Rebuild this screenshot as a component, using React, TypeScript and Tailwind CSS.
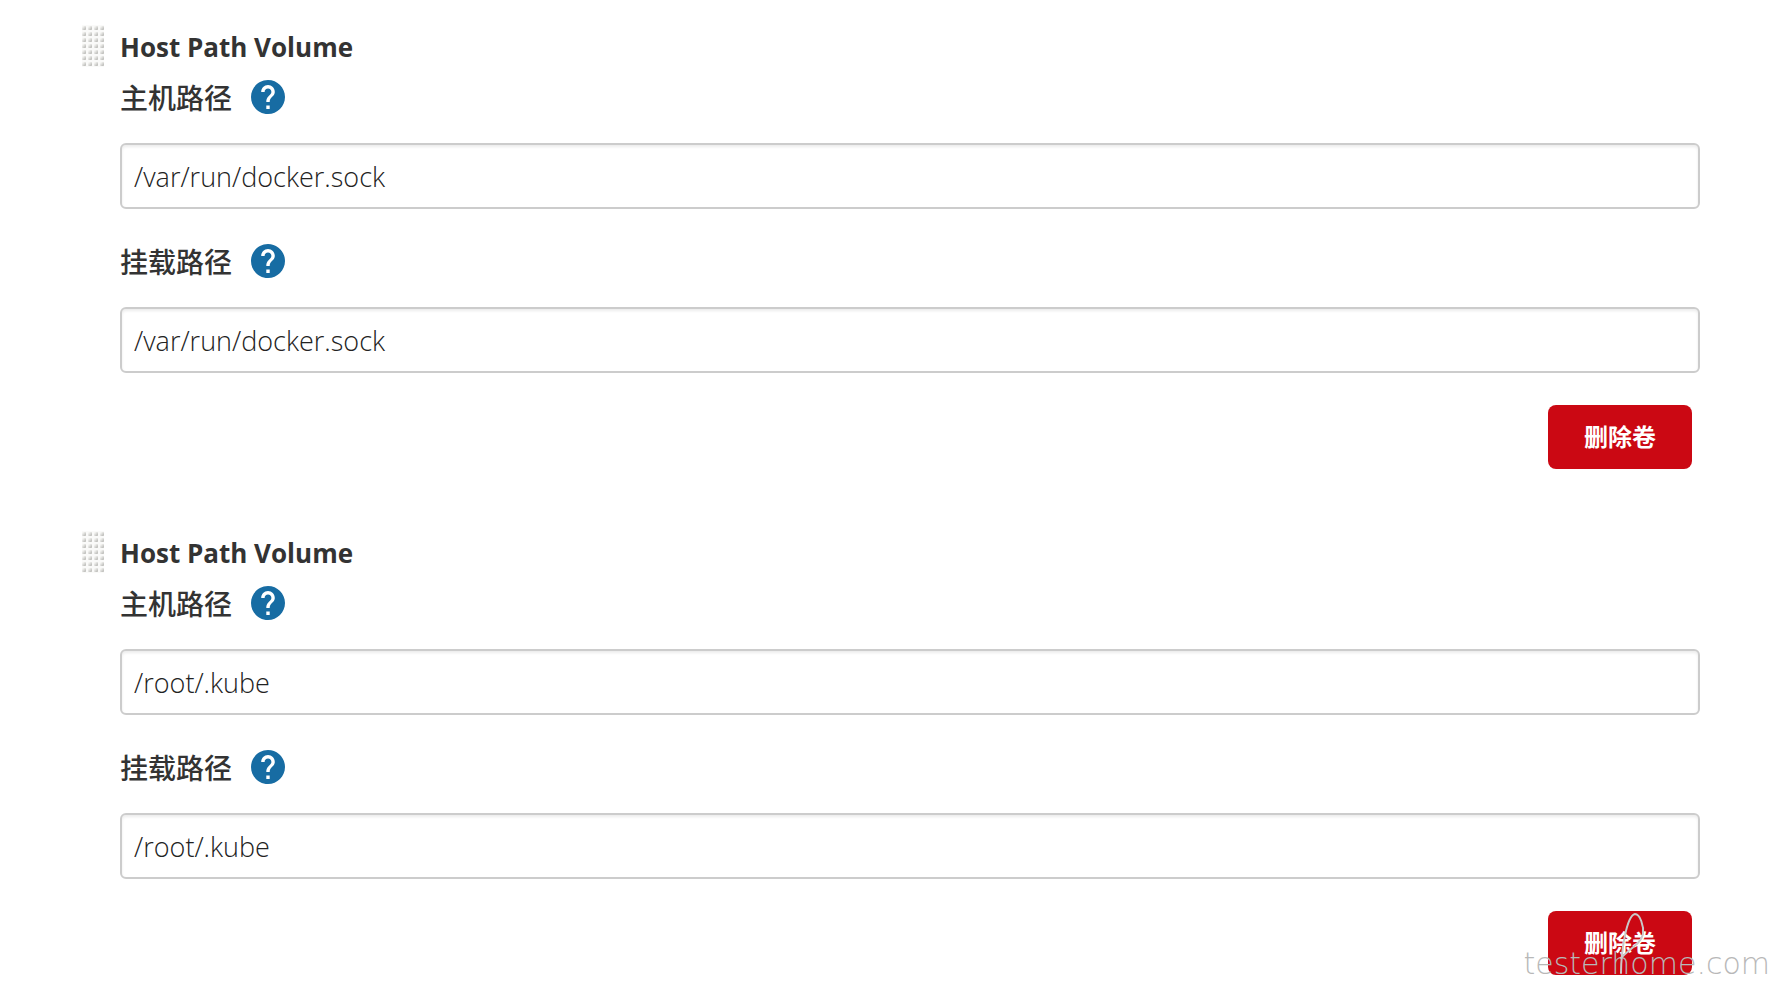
import { useId } from "react";

type Volume = {
  hostPath: string;
  mountPath: string;
};

const volumes: Volume[] = [
  { hostPath: "/var/run/docker.sock", mountPath: "/var/run/docker.sock" },
  { hostPath: "/root/.kube", mountPath: "/root/.kube" },
];

function DragHandle() {
  const id = useId();
  return (
    <svg width="22" height="42" aria-hidden="true" className="-mt-1 shrink-0 cursor-move">
      <defs>
        <linearGradient id={`${id}-dot`} x1="0" y1="0" x2="1" y2="1">
          <stop offset="0.2" stopColor="#f4f4f2" />
          <stop offset="1" stopColor="#b0b0ac" />
        </linearGradient>
        <pattern id={`${id}-grid`} width="6" height="6" patternUnits="userSpaceOnUse">
          <rect width="6" height="6" fill="#fafaf9" />
          <rect x="0" y="1" width="4" height="4" rx="1" fill={`url(#${id}-dot)`} />
        </pattern>
      </defs>
      <rect width="22" height="42" fill={`url(#${id}-grid)`} />
    </svg>
  );
}

function HelpLink({ label }: { label: string }) {
  return (
    <a href="#help" aria-label={`Help: ${label}`} className="text-[#176ca3]">
      <svg viewBox="2 2 20 20" fill="currentColor" className="size-[34px]">
        <path d="M12 2C6.48 2 2 6.48 2 12s4.48 10 10 10 10-4.48 10-10S17.52 2 12 2zm1 17h-2v-2h2v2zm2.07-7.75l-.9.92C13.45 12.9 13 13.5 13 15h-2v-.5c0-1.1.45-2.1 1.17-2.83l1.24-1.26c.37-.36.59-.86.59-1.41 0-1.1-.9-2-2-2s-2 .9-2 2H8c0-2.21 1.79-4 4-4s4 1.79 4 4c0 .88-.36 1.68-.93 2.25z" />
      </svg>
    </a>
  );
}

function PathField({ label, value }: { label: string; value: string }) {
  const id = useId();
  return (
    <div>
      <div className="flex h-[34px] items-center gap-[19px]">
        <label htmlFor={id} className="pt-0.5 text-[28px] leading-8 font-medium">
          {label}
        </label>
        <HelpLink label={label} />
      </div>
      <input
        id={id}
        type="text"
        defaultValue={value}
        className="mt-[29px] block h-[66px] w-full rounded-md border-2 border-[#ccc] bg-white px-3 text-[27px] font-light text-[#222] shadow-[inset_0_2px_3px_rgba(0,0,0,0.08)] focus:border-[#176ca3] focus:outline-none"
      />
    </div>
  );
}

function VolumeSection({ volume }: { volume: Volume }) {
  return (
    <section className="flex gap-4">
      <DragHandle />
      <div className="min-w-0 flex-1">
        <h2 className="text-[26px] leading-9 font-bold">Host Path Volume</h2>
        <div className="mt-[15px] flex flex-col gap-[35px]">
          <PathField label="主机路径" value={volume.hostPath} />
          <PathField label="挂载路径" value={volume.mountPath} />
        </div>
        <div className="mt-8 flex justify-end pr-2">
          <button
            type="button"
            className="h-16 rounded-lg bg-[#cb0813] px-9 text-2xl font-bold text-white hover:bg-[#a8060f]"
          >
            删除卷
          </button>
        </div>
      </div>
    </section>
  );
}

function Watermark() {
  return (
    <div className="pointer-events-none absolute right-0 bottom-5 text-[#b8b8b8]">
      {/* tall loop rising over the middle of the signature */}
      <svg
        viewBox="0 0 30 64"
        fill="none"
        stroke="currentColor"
        strokeWidth="2"
        strokeLinecap="round"
        className="absolute bottom-1 left-[95px] h-16 w-[30px] text-[#c9c9c9]"
      >
        <path d="M3 61C3 42 8 4 17 2C22 2 26 14 25 22C23 32 11 37 3 46" />
      </svg>
      <p className="font-['DejaVu_Sans',sans-serif] text-[30px] leading-8 font-extralight">
        testerhome.com
      </p>
    </div>
  );
}

export default function App() {
  return (
    <div className="relative min-h-screen overflow-hidden bg-white font-['Open_Sans','Noto_Sans_CJK_SC',sans-serif] text-[#333]">
      <main className="flex flex-col gap-[66px] pt-[29px] pr-[70px] pb-6 pl-[82px]">
        {volumes.map((volume) => (
          <VolumeSection key={volume.hostPath} volume={volume} />
        ))}
      </main>
      <Watermark />
    </div>
  );
}
